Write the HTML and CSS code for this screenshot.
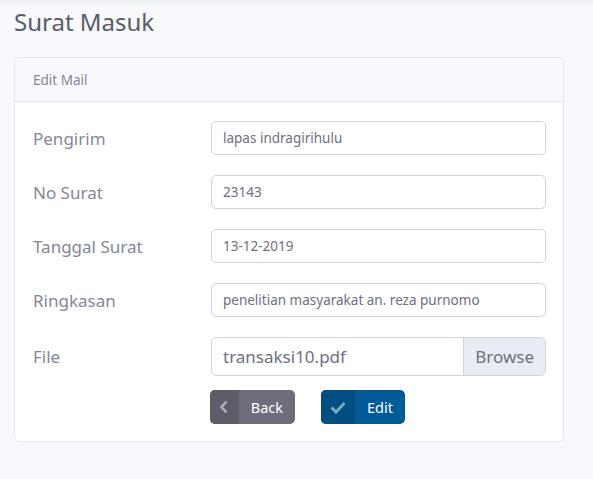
FILE: index.html
```html
<!DOCTYPE html>
<html>
<head>
<meta charset="utf-8">
<link rel="stylesheet" href="styles.css">
</head>
<body>
<div class="page">
  <h1 class="title">Surat Masuk</h1>
  <div class="card">
    <div class="card-header">Edit Mail</div>
    <div class="card-body">
      <div class="row">
        <label class="label">Pengirim</label>
        <div class="input">lapas indragirihulu</div>
      </div>
      <div class="row">
        <label class="label">No Surat</label>
        <div class="input">23143</div>
      </div>
      <div class="row">
        <label class="label">Tanggal Surat</label>
        <div class="input">13-12-2019</div>
      </div>
      <div class="row">
        <label class="label">Ringkasan</label>
        <div class="input">penelitian masyarakat an. reza purnomo</div>
      </div>
      <div class="row file-row">
        <label class="label">File</label>
        <div class="file">
          <span class="file-name">transaksi10.pdf</span>
          <span class="browse">Browse</span>
        </div>
      </div>
      <div class="actions">
        <span class="btn btn-back">
          <span class="icon"><svg width="10" height="14" viewBox="0 0 10 14"><path d="M7.5 1.5 L2.5 7 L7.5 12.5" fill="none" stroke="currentColor" stroke-width="2.6"/></svg></span>
          <span class="text">Back</span>
        </span>
        <span class="btn btn-edit">
          <span class="icon"><svg width="16" height="13" viewBox="0 0 16 13"><path d="M1.5 6.5 L6 11 L14.5 2" fill="none" stroke="currentColor" stroke-width="3"/></svg></span>
          <span class="text">Edit</span>
        </span>
      </div>
    </div>
  </div>
</div>
</body>
</html>
```
FILE: styles.css
```css
* { box-sizing: border-box; }
html, body { margin: 0; padding: 0; }
body {
  background: linear-gradient(#eff0f4 0, #f8f9fc 8px, #f8f9fc 100%);
  font-family: "Noto Sans", "Open Sans", sans-serif;
  color: #858796;
  width: 593px;
  height: 479px;
  overflow: hidden;
}
.page { padding: 4px 29px 0 14px; }
.title {
  margin: 0 0 17px 0;
  font-size: 24px;
  font-weight: 400;
  color: #5a5c69;
  line-height: 36px;
}
.card {
  background: #fff;
  border: 1px solid #e3e6f0;
  border-radius: 5px;
}
.card-header {
  background: #f8f9fc;
  border-bottom: 1px solid #e3e6f0;
  border-radius: 5px 5px 0 0;
  height: 44px;
  padding: 0 18px;
  display: flex;
  align-items: center;
  font-size: 13.5px;
  color: #858796;
}
.card-body { padding: 19px 17px 17px 18px; }
.row {
  display: flex;
  align-items: center;
  margin-bottom: 20px;
}
.row.file-row { margin-bottom: 14px; }
.label {
  width: 178px;
  font-size: 17px;
  color: #858796;
}
.input {
  flex: 1;
  height: 34px;
  border: 1px solid #d1d3e2;
  border-radius: 5px;
  padding: 0 11px;
  display: flex;
  align-items: center;
  font-size: 13.5px;
  color: #6e707e;
}
.file {
  flex: 1;
  height: 39px;
  border: 1px solid #d1d3e2;
  border-radius: 5px;
  display: flex;
  overflow: hidden;
  font-size: 17px;
  color: #6e707e;
}
.file-name { flex: 1; padding: 0 11px; display: flex; align-items: center; }
.browse {
  background: #eaecf4;
  border-left: 1px solid #d1d3e2;
  padding: 0 11px;
  display: flex;
  align-items: center;
}
.actions {
  display: flex;
  gap: 26px;
  padding-left: 177px;
}
.btn {
  display: flex;
  height: 34px;
  border-radius: 5px;
  overflow: hidden;
  color: #fff;
  font-size: 14.5px;
}
.btn .icon {
  display: flex;
  align-items: center;
  justify-content: center;
  color: rgba(255,255,255,0.5);
}
.btn .text { display: flex; align-items: center; padding: 0 12px; }
.btn-back { background: #6e6d7b; width: 85px; }
.btn-back .icon { background: #5d5c68; width: 31px; }
.btn-edit { background: #015b98; width: 84px; }
.btn-edit .icon { background: #014e83; width: 36px; }
```
